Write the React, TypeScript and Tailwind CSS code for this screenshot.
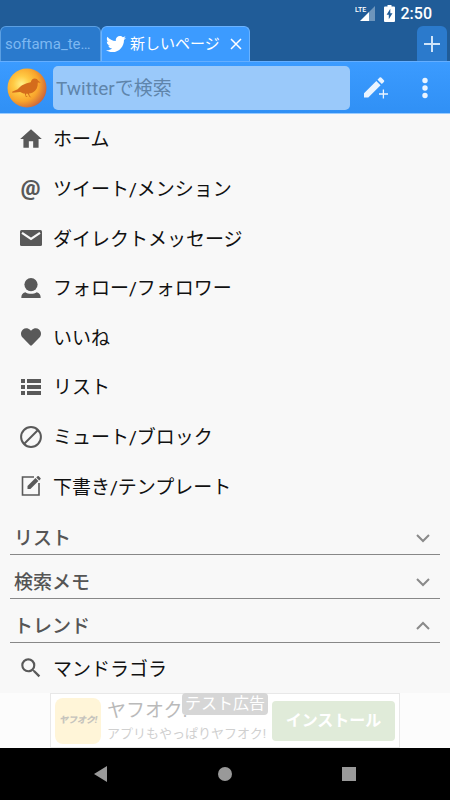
import { useState } from "react";
import type { ReactNode } from "react";
import { FaHeart, FaTwitter } from "react-icons/fa";
import { MdHome, MdSearch } from "react-icons/md";

function MailIcon() {
  return (
    <svg width="22" height="16" viewBox="0 0 22 16">
      <rect width="22" height="16" rx="1.5" fill="currentColor" />
      <path d="M2 2.800 11 9l9-6.200" fill="none" stroke="#f8f8f8" strokeWidth="2.200" />
    </svg>
  );
}

function PersonIcon() {
  return (
    <svg width="20" height="20" viewBox="0 0 20 20" fill="currentColor">
      <circle cx="10" cy="6.600" r="6.600" />
      <path d="M.3 20c0-3.400 1.200-5 4-5.800 1.600 1.100 3.500 1.600 5.700 1.600s4.100-.5 5.700-1.600c2.800.8 4 2.400 4 5.800z" />
    </svg>
  );
}

function ListIcon() {
  return (
    <svg width="20" height="16" viewBox="0 0 20 16" fill="currentColor">
      <path d="M0 0h4v4H0zM6 0h14v4H6zM0 6h4v4H0zM6 6h14v4H6zM0 12h4v4H0zM6 12h14v4H6z" />
    </svg>
  );
}

function MuteIcon() {
  return (
    <svg width="22" height="22" viewBox="0 0 22 22" fill="none" stroke="currentColor" strokeWidth="2">
      <circle cx="11" cy="11" r="9.900" />
      <path d="M4 18 18 4" />
    </svg>
  );
}

function DraftIcon() {
  return (
    <svg width="20" height="20" viewBox="0 0 20 20" fill="none" stroke="currentColor">
      <path d="M13 1H1.500v18H18V7" strokeWidth="1.600" />
      <path
        d="M6.500 13v-2.900l8-8 2.900 2.900-8 8zM15.300 1.500l1.200-1.200a.9.900 0 0 1 1.300 0l1.600 1.600a.9.900 0 0 1 0 1.300l-1.200 1.200z"
        fill="currentColor"
        stroke="none"
      />
    </svg>
  );
}

function ComposeIcon() {
  return (
    <svg width="26" height="24" viewBox="0 0 26 24" fill="currentColor">
      <path d="M1 17.200V21.500h4.300L17.600 9.200l-4.300-4.300zM20.900 5.900a1.100 1.100 0 0 0 0-1.600l-2.700-2.700a1.100 1.100 0 0 0-1.600 0l-2.100 2.100 4.300 4.300z" />
      <path d="M20.400 13.500v9M16 18h9" stroke="currentColor" strokeWidth="1.300" />
    </svg>
  );
}

function MoreIcon() {
  return (
    <svg width="28" height="22" viewBox="0 0 28 22" fill="currentColor">
      <circle cx="14" cy="3.500" r="2.700" />
      <circle cx="14" cy="11" r="2.700" />
      <circle cx="14" cy="18.500" r="2.700" />
    </svg>
  );
}

function BatteryIcon() {
  return (
    <svg width="11" height="17" viewBox="0 0 11 17" className="ml-[9px]">
      <path d="M3.500 0h4v1.500H10a1 1 0 0 1 1 1V16a1 1 0 0 1-1 1H1a1 1 0 0 1-1-1V2.500a1 1 0 0 1 1-1h2.500z" fill="#fff" />
      <path d="M6.300 3.800 2.600 9.800h2.200v4.400l3.700-6H6.300z" fill="#205c98" />
    </svg>
  );
}

function BirdLogo() {
  return (
    <svg width="40" height="40" viewBox="0 0 40 40">
      <defs>
        <radialGradient id="ball" cx="0.36" cy="0.4" r="0.68">
          <stop offset="0" stopColor="#fff08a" />
          <stop offset="0.3" stopColor="#ffcb45" />
          <stop offset="0.65" stopColor="#f9a52c" />
          <stop offset="1" stopColor="#c9613c" />
        </radialGradient>
      </defs>
      <circle cx="20" cy="20" r="19.500" fill="url(#ball)" />
      <path
        d="M33.800 14.700l-3-.2c.2 4.600-1.400 8-5 9.900-1.300.7-2.500 1-3.800 1.200l.9 2.700 1.700 1.100-2-.3-1.900-3.400h-1.700l.2 2.400 1.700 1-2-.1-1.200-3.400c-1.900-.2-3.200-.8-4.500-1.600L5.300 24.700l-.2-.9 5.600-2.500c3.200-4.200 7.400-5.900 13-7.100.6-2.300 1.900-3.700 4-3.700 1.700 0 2.800.8 3.300 2z"
        fill="#d46c1c"
      />
    </svg>
  );
}

function Chevron({ up = false }: { up?: boolean }) {
  return (
    <svg width="14" height="10" viewBox="0 0 14 10" fill="none" stroke="#8a8a8a" strokeWidth="2">
      <path d={up ? "M1 8l6-6 6 6" : "M1 2l6 6 6-6"} />
    </svg>
  );
}

const menu: { label: string; icon: ReactNode }[] = [
  { label: "ホーム", icon: <MdHome size={26} /> },
  {
    label: "ツイート/メンション",
    icon: <span className="text-[22px] leading-6 font-black">@</span>,
  },
  { label: "ダイレクトメッセージ", icon: <MailIcon /> },
  { label: "フォロー/フォロワー", icon: <PersonIcon /> },
  { label: "いいね", icon: <FaHeart size={20} /> },
  { label: "リスト", icon: <ListIcon /> },
  { label: "ミュート/ブロック", icon: <MuteIcon /> },
  { label: "下書き/テンプレート", icon: <DraftIcon /> },
];

function MenuRow({ label, icon }: { label: string; icon: ReactNode }) {
  return (
    <button className="flex h-full w-full items-center gap-2 pl-4 text-left text-[19px] leading-7 text-[#111]">
      <span className="flex w-[29px] justify-center text-[#595959]">{icon}</span>
      <span className="pt-[3px]">{label}</span>
    </button>
  );
}

function SectionHeader({ label, open = false }: { label: string; open?: boolean }) {
  return (
    <button
      aria-expanded={open}
      className="mx-[10px] flex h-11 items-center justify-between border-b border-[#888] pt-[10px] pr-[10px] pl-1 text-[19px] leading-7 font-medium text-[#555]"
    >
      <span className="pt-[2px]">{label}</span>
      <Chevron up={open} />
    </button>
  );
}

function StatusBar() {
  return (
    <div className="flex h-[26px] items-center justify-end pr-[18px] text-white">
      <svg width="20" height="18" viewBox="0 0 20 18" fill="#fff">
        <path d="M20 2v15h-6V8z" opacity="0.35" />
        <path d="M14 8v9H5z" />
        <text x="0" y="8" fontFamily="Roboto" fontSize="7" fontWeight="500">
          LTE
        </text>
      </svg>
      <BatteryIcon />
      <span className="ml-[6px] pt-px text-[16px] leading-5 font-medium">2:50</span>
    </div>
  );
}

function Tabs() {
  return (
    <div className="flex h-[35px] items-stretch">
      <button className="w-[101px] rounded-t-md border border-b-0 border-[#5b9fe2] bg-[#2a7acd] px-1 pt-px text-left text-[15px] text-[#7db8f2]">
        softama_te…
      </button>
      <div className="flex w-[149px] items-center rounded-t-md border border-b-0 border-[#6bb3ff] bg-[#3c9bff] pr-[7px] pl-1 text-white">
        <FaTwitter size={20} />
        <span className="ml-1 flex-1 text-[15px] leading-5 whitespace-nowrap">新しいページ</span>
        <button aria-label="閉じる">
          <svg width="12" height="12" viewBox="0 0 12 12" stroke="currentColor" strokeWidth="1.500">
            <path d="M1 1l10 10M11 1L1 11" />
          </svg>
        </button>
      </div>
      <button
        aria-label="新しいタブ"
        className="mr-[3px] ml-auto flex w-[30px] items-center justify-center rounded-t-md bg-[#2b7acc] text-[#d0e4f8]"
      >
        <svg width="16" height="16" viewBox="0 0 16 16" stroke="currentColor" strokeWidth="2">
          <path d="M8 0v16M0 8h16" />
        </svg>
      </button>
    </div>
  );
}

function Toolbar() {
  const [query, setQuery] = useState("");

  return (
    <div className="flex h-[53px] items-center border-t border-b border-t-[#64aeff] border-b-[#9accff] bg-gradient-to-b from-[#3b9bff] to-[#3090f5] pr-[11px] pl-[7px] text-[#eaf4ff]">
      <BirdLogo />
      <input
        type="text"
        aria-label="Twitterで検索"
        placeholder="Twitterで検索"
        value={query}
        onChange={(e) => setQuery(e.target.value)}
        className="ml-[6px] h-11 min-w-0 flex-1 rounded-[5px] bg-[#9ac9fa] px-[3px] pt-[2px] text-[19px] text-[#234] placeholder:text-[#5f85ab]"
      />
      <button aria-label="ツイート" className="ml-[13px]">
        <ComposeIcon />
      </button>
      <button aria-label="メニュー" className="ml-[22px]">
        <MoreIcon />
      </button>
    </div>
  );
}

function AdBanner() {
  return (
    <div className="flex justify-center bg-[#fcfcfc]">
      <div className="relative flex h-[55px] w-[350px] items-center border border-[#e8e8e8] bg-white px-1">
        <div className="flex size-[46px] shrink-0 items-center justify-center rounded-lg bg-[#fff5d8] text-[9px] font-black text-[#c6c4bd] italic">
          ヤフオク!
        </div>
        <div className="ml-[6px] flex-1 pb-[2px] whitespace-nowrap">
          <div className="text-[19px] leading-7 text-[#bababa]">ヤフオク!</div>
          <div className="text-[13px] leading-[18px] text-[#d0d0d0]">アプリもやっぱりヤフオク!</div>
        </div>
        <button className="h-10 w-[123px] shrink-0 rounded-sm bg-[#e0ebd9] text-[16px] font-bold text-white">
          インストール
        </button>
        <span className="absolute -top-px left-[131px] rounded-sm bg-[#d6d6d6] px-[3px] text-[16px] leading-[22px] text-white">
          テスト広告
        </span>
      </div>
    </div>
  );
}

function NavBar() {
  return (
    <div className="flex h-[52px] items-center justify-center gap-[110px] bg-black text-[#999]">
      <button aria-label="戻る">
        <svg width="14" height="16" viewBox="0 0 14 16" fill="currentColor">
          <path d="M13 0v16L0 8z" />
        </svg>
      </button>
      <button aria-label="ホーム" className="size-[14px] rounded-full bg-[#999]" />
      <button aria-label="履歴" className="size-[14px] bg-[#999]" />
    </div>
  );
}

export default function App() {
  return (
    <div className="flex min-h-screen flex-col bg-[#f8f8f8] font-[Roboto,'Noto_Sans_CJK_JP',sans-serif]">
      <header className="bg-[#205c98]">
        <StatusBar />
        <Tabs />
        <Toolbar />
      </header>
      <main className="flex flex-1 flex-col">
        <ul className="grid flex-1 auto-rows-fr">
          {menu.map((item) => (
            <li key={item.label}>
              <MenuRow label={item.label} icon={item.icon} />
            </li>
          ))}
        </ul>
        <SectionHeader label="リスト" />
        <SectionHeader label="検索メモ" />
        <SectionHeader label="トレンド" open />
        <div className="h-[50px]">
          <MenuRow label="マンドラゴラ" icon={<MdSearch size={26} />} />
        </div>
      </main>
      <AdBanner />
      <NavBar />
    </div>
  );
}
